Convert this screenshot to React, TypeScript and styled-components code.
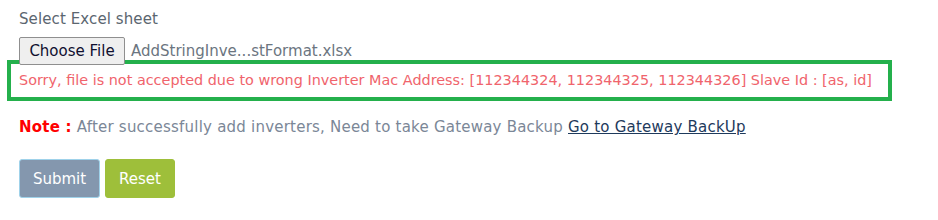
import styled, { createGlobalStyle } from "styled-components";

const GlobalStyle = createGlobalStyle`
  body {
    margin: 0;
    background: #fff;
    font-family: "DejaVu Sans", "Open Sans", sans-serif;
  }
`;

const Page = styled.div`
  padding: 9px 0 0 19px;
  width: 938px;
  box-sizing: border-box;
`;

const Label = styled.div`
  font-size: 15px;
  letter-spacing: 0.1px;
  color: #5b6670;
  line-height: 20px;
`;

const FileRow = styled.div`
  display: flex;
  align-items: center;
  gap: 6px;
  margin-top: 8px;
  height: 28px;
`;

const ChooseButton = styled.button`
  height: 28px;
  width: 106px;
  padding: 0;
  font-family: "DejaVu Sans", sans-serif;
  font-size: 15px;
  color: #101030;
  background: #efefef;
  border: 1px solid #8f8f8f;
  border-radius: 2px;
`;

const FileName = styled.span`
  font-size: 15px;
  color: #6b7580;
`;

const ErrorBox = styled.div`
  margin: -5px 0 0 -12px;
  width: 885px;
  height: 41px;
  box-sizing: border-box;
  border: 4px solid #24b04c;
  padding: 0 0 2px 8px;
  display: flex;
  align-items: center;
`;

const ErrorText = styled.span`
  font-size: 14.4px;
  color: #f0646c;
  white-space: nowrap;
`;

const Note = styled.div`
  margin-top: 16px;
  font-size: 15px;
  letter-spacing: 0.22px;
  line-height: 20px;
  color: #7b8797;
  white-space: nowrap;
`;

const NoteLabel = styled.b`
  color: #ff0000;
`;

const Link = styled.a`
  color: #1e3a5c;
  text-decoration: underline;
`;

const Actions = styled.div`
  display: flex;
  gap: 5px;
  margin-top: 22px;
`;

const Button = styled.button<{ $variant: "submit" | "reset" }>`
  height: 39px;
  width: ${(p) => (p.$variant === "submit" ? "81px" : "70px")};
  padding: 0;
  font-family: "DejaVu Sans", sans-serif;
  font-size: 15px;
  color: #fff;
  border-radius: 3px;
  border: 1px solid ${(p) => (p.$variant === "submit" ? "#9fd2ea" : "#9ebf3a")};
  background: ${(p) => (p.$variant === "submit" ? "#8497ae" : "#9ebf3a")};
`;

export default function App() {
  return (
    <Page>
      <GlobalStyle />
      <Label>Select Excel sheet</Label>
      <FileRow>
        <ChooseButton>Choose File</ChooseButton>
        <FileName>AddStringInve...stFormat.xlsx</FileName>
      </FileRow>
      <ErrorBox>
        <ErrorText>
          Sorry, file is not accepted due to wrong Inverter Mac Address: [112344324, 112344325, 112344326] Slave Id : [as, id]
        </ErrorText>
      </ErrorBox>
      <Note>
        <NoteLabel>Note :</NoteLabel> After successfully add inverters, Need to take Gateway Backup{" "}
        <Link href="#">Go to Gateway BackUp</Link>
      </Note>
      <Actions>
        <Button $variant="submit">Submit</Button>
        <Button $variant="reset">Reset</Button>
      </Actions>
    </Page>
  );
}
